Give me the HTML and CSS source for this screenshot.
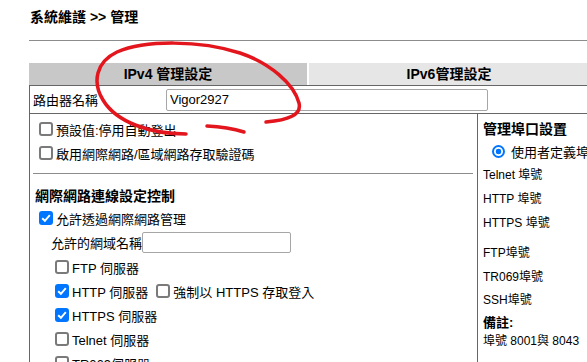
FILE: index.html
```html
<!DOCTYPE html>
<html lang="zh-Hant">
<head>
<meta charset="utf-8">
<title>系統維護 管理</title>
<link rel="stylesheet" href="styles.css">
</head>
<body>
<div class="page">
  <div class="title">系統維護 &gt;&gt; 管理</div>
  <div class="panel">
    <div class="tabs">
      <div class="tab tab-active">IPv4 管理設定</div>
      <div class="tab tab-inactive">IPv6管理設定</div>
    </div>
    <div class="name-row">
      <span class="name-label">路由器名稱</span>
      <input class="name-input" type="text" value="Vigor2927">
    </div>
    <div class="body">
      <div class="left">
        <label class="check-row"><input class="cb" type="checkbox">預設值:停用自動登出</label>
        <label class="check-row"><input class="cb" type="checkbox">啟用網際網路/區域網路存取驗證碼</label>
        <div class="sep"></div>
        <div class="heading">網際網路連線設定控制</div>
        <label class="check-row"><input class="cb" type="checkbox" checked>允許透過網際網路管理</label>
        <div class="domain-row">允許的網域名稱<input class="domain-input" type="text"></div>
        <label class="check-row sub"><input class="cb" type="checkbox">FTP 伺服器</label>
        <div class="check-row sub"><input class="cb" type="checkbox" checked>HTTP 伺服器<input class="cb second" type="checkbox">強制以 HTTPS 存取登入</div>
        <label class="check-row sub"><input class="cb" type="checkbox" checked>HTTPS 伺服器</label>
        <label class="check-row sub"><input class="cb" type="checkbox">Telnet 伺服器</label>
        <label class="check-row sub"><input class="cb" type="checkbox">TR069伺服器</label>
      </div>
      <div class="right">
        <div class="right-title">管理埠口設置</div>
        <label class="radio-row"><input class="rb" type="radio" name="port" checked>使用者定義埠號</label>
        <div class="port-row">Telnet 埠號</div>
        <div class="port-row">HTTP 埠號</div>
        <div class="port-row">HTTPS 埠號</div>
        <div class="port-row gap">FTP埠號</div>
        <div class="port-row">TR069埠號</div>
        <div class="port-row ssh">SSH埠號</div>
        <div class="note-title">備註:</div>
        <div class="note-text">埠號 8001與 8043</div>
      </div>
    </div>
  </div>
</div>
<svg class="annot" width="587" height="362" viewBox="0 0 587 362">
  <path d="M186,134 C150,134 116,122 103,100 C92,82 96,62 117,52 C145,40 200,40 240,53 C270,63 294,84 299,103 C302,115 288,120 266,122" fill="none" stroke="#e3161d" stroke-width="3.5" stroke-linecap="round"/>
  <path d="M207,126 Q228,127 244,132" fill="none" stroke="#e3161d" stroke-width="3.5" stroke-linecap="round"/>
</svg>
</body>
</html>
```

FILE: styles.css
```css
html, body {
  margin: 0;
  overflow: hidden;
}
body {
  position: relative;
  width: 587px;
  height: 362px;
  background: #fff;
  color: #000;
  font-family: "Liberation Sans", "Noto Sans CJK TC", sans-serif;
  font-size: 13px;
}
.page {
  padding-left: 29px;
  width: 600px;
}
.title {
  height: 31px;
  padding-top: 9px;
  padding-left: 1px;
  line-height: 17px;
  font-size: 14px;
  font-weight: bold;
  border-bottom: 1px solid #8c8c8c;
}
.panel {
  width: 560px;
}
.tabs {
  display: flex;
  gap: 2px;
  margin-top: 22px;
  height: 22px;
}
.tab {
  line-height: 22px;
  text-align: center;
  font-size: 14px;
  font-weight: bold;
}
.tab-active {
  width: 278px;
  background: #c8c8c8;
}
.tab-inactive {
  flex: 1;
  background: #e6e6e6;
}
.name-row {
  display: flex;
  align-items: center;
  box-sizing: border-box;
  height: 29px;
  border: 1px solid #666;
  padding-left: 3px;
}
.name-label {
  width: 133px;
}
.name-input {
  box-sizing: border-box;
  width: 322px;
  height: 22px;
  margin: 0;
  padding: 0 3px;
  border: 1px solid #a6a6a6;
  border-radius: 2px;
  font: 13px "Liberation Sans", sans-serif;
  color: #000;
}
.body {
  display: flex;
  height: 260px;
  border-left: 1px solid #666;
}
.left {
  width: 447px;
  padding-top: 3px;
}
.check-row {
  display: flex;
  align-items: center;
  height: 24px;
  padding-left: 9px;
  white-space: nowrap;
}
.cb {
  -webkit-appearance: none;
  appearance: none;
  flex-shrink: 0;
  box-sizing: border-box;
  width: 14px;
  height: 14px;
  margin: 0 3px 0 0;
  border: 2px solid #7a7a7a;
  border-radius: 3px;
  background: #fff;
}
.cb:checked {
  border-color: #0075ff;
  background: #0075ff url("data:image/svg+xml;utf8,<svg xmlns='http://www.w3.org/2000/svg' viewBox='0 0 10 10'><path d='M1.2 5.2 3.9 7.8 8.8 2.2' fill='none' stroke='white' stroke-width='1.9'/></svg>") center / 10px 10px no-repeat;
}
.cb.second {
  margin-left: 8px;
}
.check-row.sub {
  padding-left: 25px;
}
.sep {
  margin: 8px 4px 0 3px;
  border-top: 1px solid #8c8c8c;
}
.heading {
  margin-top: 12px;
  padding-left: 5px;
  line-height: 20px;
  font-size: 14px;
  font-weight: bold;
}
.domain-row {
  display: flex;
  align-items: center;
  height: 25px;
  padding-left: 21px;
}
.domain-input {
  box-sizing: border-box;
  width: 149px;
  height: 21px;
  margin: 0;
  border: 1px solid #a6a6a6;
  border-radius: 2px;
}
.right {
  flex: 1;
  border-left: 1px solid #666;
  padding-left: 5px;
  font-size: 12px;
  white-space: nowrap;
  overflow: hidden;
}
.right-title {
  padding-top: 5px;
  line-height: 20px;
  font-size: 14px;
  font-weight: bold;
}
.radio-row {
  display: flex;
  align-items: center;
  height: 24px;
  padding-left: 9px;
  font-size: 13px;
}
.rb {
  -webkit-appearance: none;
  appearance: none;
  flex-shrink: 0;
  box-sizing: border-box;
  width: 13px;
  height: 13px;
  margin: 0 6px 0 0;
  border: 2px solid #0075ff;
  border-radius: 50%;
  background: radial-gradient(circle, #0075ff 0 2.6px, #fff 3.1px);
}
.port-row {
  line-height: 24px;
}
.port-row.gap {
  margin-top: 6px;
}
.port-row.ssh {
  line-height: 23px;
}
.note-title {
  line-height: 21px;
  font-size: 13px;
  font-weight: bold;
}
.note-text {
  line-height: 16px;
}
.annot {
  position: absolute;
  left: 0;
  top: 0;
  pointer-events: none;
}
```
